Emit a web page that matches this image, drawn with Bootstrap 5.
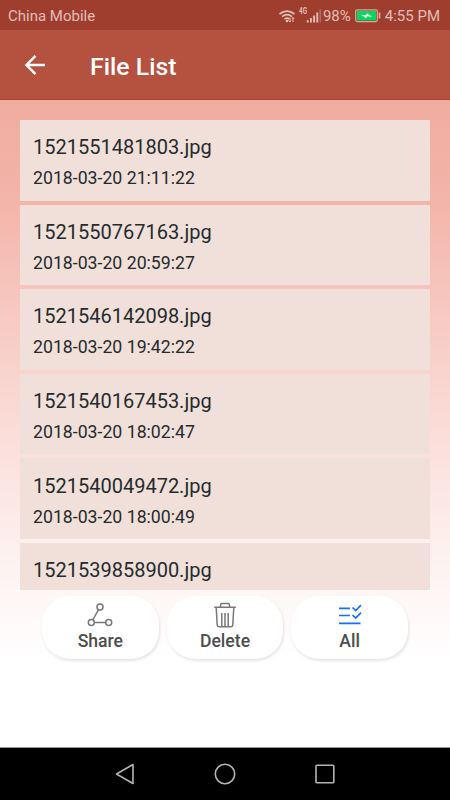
<!DOCTYPE html>
<html lang="en">
<head>
<meta charset="utf-8">
<meta name="viewport" content="width=device-width, initial-scale=1">
<title>File List</title>
<link href="https://cdn.jsdelivr.net/npm/bootstrap@5.3.0/dist/css/bootstrap.min.css" rel="stylesheet">
<style>
  body { font-family: Roboto, "Liberation Sans", sans-serif; width: 450px; height: 800px; color: #252b2d; }
  svg { display: block; fill: none; flex-shrink: 0; }
  .status-bar { height: 30px; background: #9f3e2f; color: #e2bdb6; font-size: 15px; line-height: 30px; padding: 1px 10px 0 8px; }
  .app-bar { height: 70px; background: #b5513f; border-bottom: 1px solid #ad4030; padding-left: 24px; gap: 42px; }
  .app-title { font-size: 24.8px; font-weight: 500; line-height: 30px; padding-top: 4px; }
  .screen { background: linear-gradient(#f1aca0 0, #f3b4a9 100px, #f7cac3 220px, #fbe0dc 350px, #fdf5f3 480px, #fff 560px); padding: 20px 20px 0; }
  .file-list { height: 470px; gap: 3.9px; }
  .file-item { height: 80.7px; background: #f0e0d9; padding: 15.3px 13px 0; }
  .file-name { font-size: 20px; line-height: 24px; }
  .file-date { font-size: 17.7px; line-height: 20px; margin-top: 9px; }
  .actions { gap: 8px; padding: 6px 22px 0; }
  .action { width: 117px; height: 63px; border-radius: 28px; background: #fff; color: #4d4d4d; font-size: 17.6px; font-weight: 500; line-height: 22px; box-shadow: 1px 2px 3px rgba(0,0,0,.1); padding-top: 6px; }
  .nav-keys { height: 53px; background: #000; border-top: 1px solid #999; }
</style>
<script src="https://cdn.jsdelivr.net/npm/bootstrap@5.3.0/dist/js/bootstrap.bundle.min.js"></script>
</head>
<body class="d-flex flex-column overflow-hidden m-0">
  <div class="status-bar d-flex justify-content-between flex-shrink-0">
    <span>China Mobile</span>
    <div class="d-flex align-items-center">
      <svg width="46" height="18" viewBox="0 0 46 18" stroke="#e2bdb6">
        <path d="M2.500 7Q10 1.200 17.500 7M5 9.700Q10 5.500 15 9.700M7.500 12.200Q10 10.200 12.300 12.200" stroke-width="1.700"/>
        <circle cx="10" cy="14" r="1.300" fill="#e2bdb6" stroke="none"/>
        <path d="M13 10.500V15M11.800 13.500l1.200 1.500 1.200-1.500M16 15v-4.500M14.800 12l1.200-1.500 1.200 1.500" stroke-width="1"/>
        <text x="22" y="7" font-size="8.500" font-weight="700" textLength="8" lengthAdjust="spacingAndGlyphs" fill="#e2bdb6" stroke="none">4G</text>
        <path d="M30.700 15.500v-2.300M33.900 15.500v-4.500M37.100 15.500V8.500M40.300 15.500V5.500" stroke-width="1.900"/>
        <path d="M43.300 15.500V2" stroke-width="1.600" opacity=".35"/>
      </svg>
      <span>98%</span>
      <svg class="ms-1" width="26" height="14" viewBox="0 0 26 14">
        <rect x=".7" y=".8" width="21.600" height="11.800" rx="1.500" stroke="#d5aaa1" stroke-width="1.200"/>
        <rect x="2" y="2" width="19" height="9.400" fill="#08d75f"/>
        <path d="M6 5.700l5.200.5.800-2 5 3.500-5-.5-.8 2z" fill="#fff"/>
        <path d="M24.500 3.500v6" stroke="#d5aaa1" stroke-width="1.700"/>
      </svg>
      <span class="ms-1">4:55 PM</span>
    </div>
  </div>
  <header class="app-bar d-flex align-items-center text-white flex-shrink-0">
    <svg width="24" height="24" viewBox="0 0 24 24" stroke="#fff" stroke-width="2.500"><path d="M21 12H2.800M11.500 2.800L2.500 12l9 9.200"/></svg>
    <h1 class="app-title m-0">File List</h1>
  </header>
  <main class="screen flex-grow-1">
    <div class="file-list d-flex flex-column overflow-hidden">
      <div class="file-item flex-shrink-0"><div class="file-name">1521551481803.jpg</div><div class="file-date">2018-03-20 21:11:22</div></div>
      <div class="file-item flex-shrink-0"><div class="file-name">1521550767163.jpg</div><div class="file-date">2018-03-20 20:59:27</div></div>
      <div class="file-item flex-shrink-0"><div class="file-name">1521546142098.jpg</div><div class="file-date">2018-03-20 19:42:22</div></div>
      <div class="file-item flex-shrink-0"><div class="file-name">1521540167453.jpg</div><div class="file-date">2018-03-20 18:02:47</div></div>
      <div class="file-item flex-shrink-0"><div class="file-name">1521540049472.jpg</div><div class="file-date">2018-03-20 18:00:49</div></div>
      <div class="file-item flex-shrink-0"><div class="file-name">1521539858900.jpg</div></div>
    </div>
    <div class="actions d-flex">
      <button type="button" class="action border-0 d-flex flex-column align-items-center">
        <svg width="28" height="28" viewBox="0 0 28 28" stroke="#777" stroke-width="1.500"><circle cx="14" cy="5" r="3"/><circle cx="5.300" cy="20.600" r="3"/><circle cx="22.700" cy="20.600" r="3"/><path d="M12.500 7.700L6.800 18M8.300 20.600h11.400"/></svg>
        <span>Share</span>
      </button>
      <button type="button" class="action border-0 d-flex flex-column align-items-center">
        <svg width="28" height="28" viewBox="0 0 28 28" stroke="#777" stroke-width="1.500"><path d="M3.200 5.200h21.600M9.500 5V3q0-1.500 1.500-1.500h6q1.500 0 1.500 1.500v2M5.200 5.500l1 17.500q.1 1.700 1.800 1.700h12q1.700 0 1.800-1.700l1-17.500M10.800 11v13.500M17.200 11v13.500M14 11v13.500"/></svg>
        <span>Delete</span>
      </button>
      <button type="button" class="action border-0 d-flex flex-column align-items-center">
        <svg width="28" height="28" viewBox="0 0 28 28" stroke="#126fff" stroke-width="1.700"><path d="M3 6.300h11M3 13.500h11M3 21.300h21.500M16.500 5.500l3.200 3 5.300-5.300M16.500 13l3.200 3 5.300-5.300"/></svg>
        <span>All</span>
      </button>
    </div>
  </main>
  <nav class="nav-keys d-flex justify-content-center align-items-center flex-shrink-0">
    <svg width="250" height="26" viewBox="0 0 250 26" stroke="#b3b3b3" stroke-width="1.600" stroke-linejoin="round"><path d="M33 3.500v19L16.500 13z"/><circle cx="125" cy="13" r="9.700"/><rect x="216" y="4.200" width="17.800" height="17.600" rx=".8"/></svg>
  </nav>
</body>
</html>
